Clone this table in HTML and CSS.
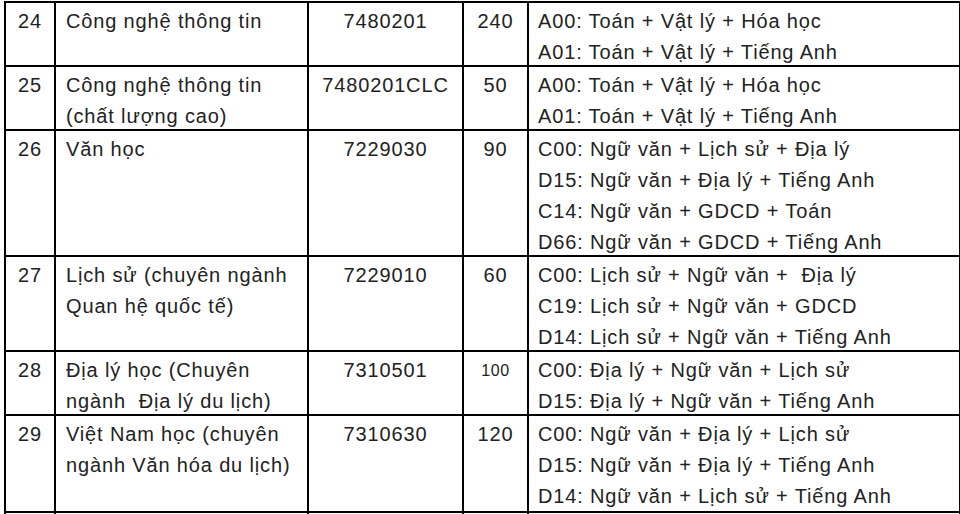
FILE: index.html
```html
<!DOCTYPE html>
<html lang="vi">
<head>
<meta charset="utf-8">
<title>Bảng ngành tuyển sinh</title>
<link rel="stylesheet" href="styles.css">
</head>
<body>
<table class="majors">
  <colgroup>
    <col class="c-no">
    <col class="c-name">
    <col class="c-code">
    <col class="c-quota">
    <col class="c-groups">
  </colgroup>
  <tbody>
    <tr>
      <td class="no"><div class="txt">24</div></td>
      <td class="name"><div class="txt">Công nghệ thông tin</div></td>
      <td class="code"><div class="txt">7480201</div></td>
      <td class="quota"><div class="txt">240</div></td>
      <td class="groups"><div class="txt">A00: Toán + Vật lý + Hóa học<br>A01: Toán + Vật lý + Tiếng Anh</div></td>
    </tr>
    <tr>
      <td class="no"><div class="txt">25</div></td>
      <td class="name"><div class="txt">Công nghệ thông tin<br>(chất lượng cao)</div></td>
      <td class="code"><div class="txt">7480201CLC</div></td>
      <td class="quota"><div class="txt">50</div></td>
      <td class="groups"><div class="txt">A00: Toán + Vật lý + Hóa học<br>A01: Toán + Vật lý + Tiếng Anh</div></td>
    </tr>
    <tr>
      <td class="no"><div class="txt">26</div></td>
      <td class="name"><div class="txt">Văn học</div></td>
      <td class="code"><div class="txt">7229030</div></td>
      <td class="quota"><div class="txt">90</div></td>
      <td class="groups"><div class="txt">C00: Ngữ văn + Lịch sử + Địa lý<br>D15: Ngữ văn + Địa lý + Tiếng Anh<br>C14: Ngữ văn + GDCD + Toán<br>D66: Ngữ văn + GDCD + Tiếng Anh</div></td>
    </tr>
    <tr>
      <td class="no"><div class="txt">27</div></td>
      <td class="name"><div class="txt">Lịch sử (chuyên ngành<br>Quan hệ quốc tế)</div></td>
      <td class="code"><div class="txt">7229010</div></td>
      <td class="quota"><div class="txt">60</div></td>
      <td class="groups"><div class="txt">C00: Lịch sử + Ngữ văn + &nbsp;Địa lý<br>C19: Lịch sử + Ngữ văn + GDCD<br>D14: Lịch sử + Ngữ văn + Tiếng Anh</div></td>
    </tr>
    <tr>
      <td class="no"><div class="txt">28</div></td>
      <td class="name"><div class="txt">Địa lý học (Chuyên<br>ngành &nbsp;Địa lý du lịch)</div></td>
      <td class="code"><div class="txt">7310501</div></td>
      <td class="quota"><div class="txt small">100</div></td>
      <td class="groups"><div class="txt">C00: Địa lý + Ngữ văn + Lịch sử<br>D15: Địa lý + Ngữ văn + Tiếng Anh</div></td>
    </tr>
    <tr class="tall">
      <td class="no"><div class="txt">29</div></td>
      <td class="name"><div class="txt">Việt Nam học (chuyên<br>ngành Văn hóa du lịch)</div></td>
      <td class="code"><div class="txt">7310630</div></td>
      <td class="quota"><div class="txt">120</div></td>
      <td class="groups"><div class="txt">C00: Ngữ văn + Địa lý + Lịch sử<br>D15: Ngữ văn + Địa lý + Tiếng Anh<br>D14: Ngữ văn + Lịch sử + Tiếng Anh</div></td>
    </tr>
    <tr class="next">
      <td class="no"></td>
      <td class="name"></td>
      <td class="code"></td>
      <td class="quota"></td>
      <td class="groups"></td>
    </tr>
  </tbody>
</table>
</body>
</html>
```

FILE: styles.css
```css
html, body {
  margin: 0;
  padding: 0;
  background: #ffffff;
  overflow: hidden;
}

body {
  width: 960px;
  height: 514px;
  padding-top: 1px;
  box-sizing: border-box;
}

.majors {
  margin-left: 4px;
  border-collapse: collapse;
  table-layout: fixed;
  width: 955px;
  font-family: "Liberation Sans", Arial, sans-serif;
  font-size: 20px;
  line-height: 31px;
  letter-spacing: 0.85px;
  color: #222222;
}

.c-no { width: 50px; }
.c-name { width: 253px; }
.c-code { width: 155px; }
.c-quota { width: 65px; }
.c-groups { width: 432px; }

.majors td {
  border: 2px solid #000000;
  padding: 0 9px;
  vertical-align: top;
  white-space: nowrap;
}

.txt {
  margin-top: 3px;
  margin-bottom: -3px;
}

.majors td.no,
.majors td.code,
.majors td.quota {
  text-align: center;
  padding-left: 2px;
  padding-right: 2px;
}

.majors td.name {
  padding-left: 10px;
}

.txt.small {
  font-size: 16px;
  letter-spacing: 0.6px;
}

.tall td {
  padding-bottom: 2px;
}

.next td {
  height: 40px;
}
```
